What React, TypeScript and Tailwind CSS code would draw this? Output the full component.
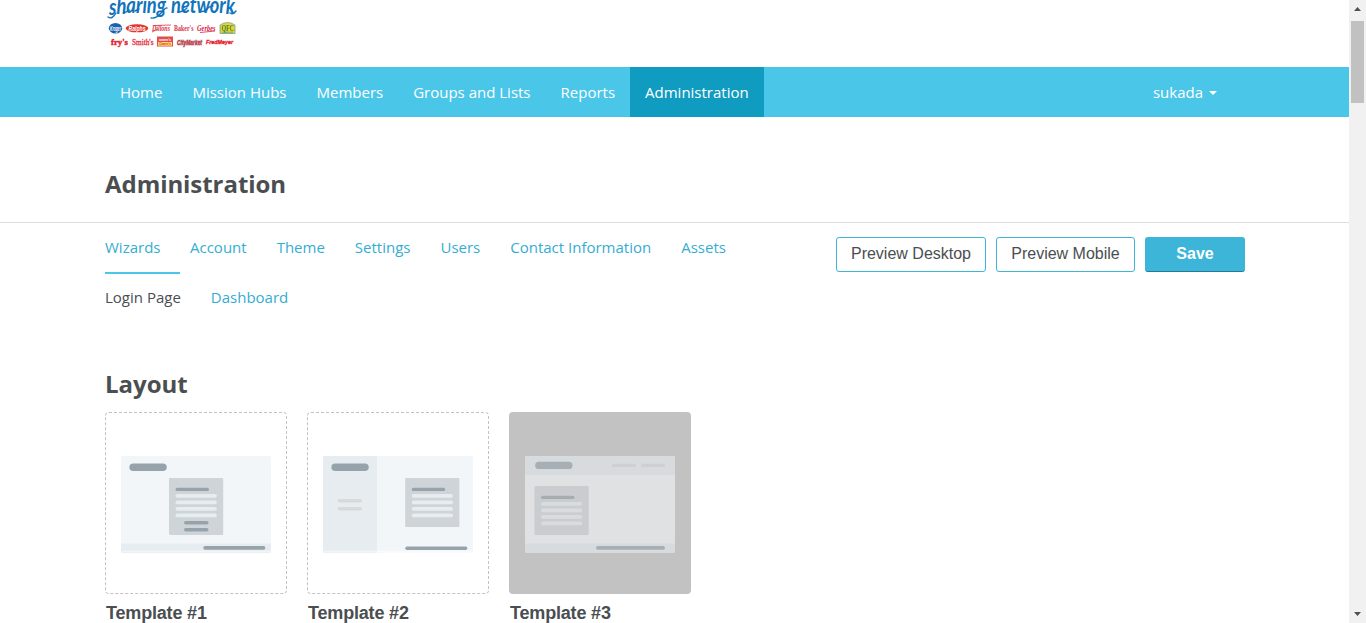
import React from "react";

const navItems = ["Home", "Mission Hubs", "Members", "Groups and Lists", "Reports"];
const tabs = ["Account", "Theme", "Settings", "Users", "Contact Information", "Assets"];

function Logo() {
  return (
    <svg width="134" height="50" viewBox="0 0 134 50" className="block" fontFamily="Liberation Sans, sans-serif" fontWeight="700">
      <g fontSize="22" fontFamily="Lato, sans-serif" fontStyle="italic" fontWeight="700" fill="#1273bd">
        <text x="4" y="14" dy="1 -1 -1 0 -.5 0 0" textLength="57" lengthAdjust="spacingAndGlyphs">sharing</text>
        <text x="66" y="12" dy="1 0 0 0 0 0 1" textLength="64" lengthAdjust="spacingAndGlyphs">network</text>
      </g>
      <path d="M3 17Q7 20 11 13M19 12Q21 13 24 10M30 11L34 9M46 18Q51 19 56 13T62 8M73 12Q78 12 82 8M95 11Q99 13 104 7L108 6M125 13Q128 15 131 11" fill="none" stroke="#1273bd" strokeWidth="1.400" strokeLinecap="round" />
      <ellipse cx="10.5" cy="28.3" rx="6.7" ry="5.3" fill="#1b62ae" />
      <text x="5" y="30.5" fontSize="6.5" fill="#fff" fontStyle="italic" textLength="11" lengthAdjust="spacingAndGlyphs">Kroger</text>
      <ellipse cx="32" cy="28.3" rx="11.3" ry="4" fill="#e2352b" />
      <text x="23.5" y="30.8" fontSize="7" fill="#fff" fontStyle="italic" textLength="17" lengthAdjust="spacingAndGlyphs">Ralphs</text>
      <text x="47" y="31" fontSize="8" fill="#d73547" fontStyle="italic" fontFamily="Liberation Serif, serif" textLength="18" lengthAdjust="spacingAndGlyphs">Dillons</text>
      <path d="M47 32L53 29M49 25.500L66 25" stroke="#d73547" strokeWidth=".8" />
      <text x="69" y="31" fontSize="7.5" fill="#dc3348" fontFamily="Liberation Serif, serif" textLength="19.500" lengthAdjust="spacingAndGlyphs">Baker's</text>
      <text x="92" y="30.500" fontSize="8.500" fill="#d92045" fontStyle="italic" fontFamily="Liberation Serif, serif" textLength="18.500" lengthAdjust="spacingAndGlyphs">Gerbes</text>
      <path d="M95 32.500L110 31" stroke="#d92045" strokeWidth=".8" />
      <path d="M115 25Q122.500 20 130 25V33.500H115Z" fill="#ecd62b" stroke="#5f96a5" strokeWidth=".7" />
      <text x="116.500" y="30.500" fontSize="7.500" fill="#26804b" fontFamily="Liberation Serif, serif" textLength="12" lengthAdjust="spacingAndGlyphs">QFC</text>
      <path d="M117 32.200H128" stroke="#54966a" strokeWidth=".7" />
      <text x="6" y="45" fontSize="9" fill="#e5202c" stroke="#e5202c" strokeWidth=".4" fontFamily="Liberation Serif, serif" textLength="17" lengthAdjust="spacingAndGlyphs">fry's</text>
      <text x="27" y="45.300" fontSize="8.500" fill="#e52b35" fontWeight="400" stroke="#e52b35" strokeWidth=".3" fontFamily="Liberation Serif, serif" textLength="21.500" lengthAdjust="spacingAndGlyphs">Smith's</text>
      <rect x="52" y="36.500" width="16" height="10" fill="#e34b4e" />
      <rect x="53" y="42" width="14" height="3.700" fill="#ffdc69" />
      <text x="54" y="40.800" fontSize="4" fill="#fff" textLength="12" lengthAdjust="spacingAndGlyphs">owen's</text>
      <text x="54" y="45.200" fontSize="3.500" fill="#d74130" textLength="12" lengthAdjust="spacingAndGlyphs">Owen's</text>
      <text x="72" y="44.700" fontSize="8" fill="#e01e35" stroke="#a4a4a4" strokeWidth="1" paintOrder="stroke" fontStyle="italic" textLength="25" lengthAdjust="spacingAndGlyphs">CityMarket</text>
      <text x="101" y="43.900" fontSize="6" fill="#e8212e" stroke="#e8212e" strokeWidth=".35" fontStyle="italic" textLength="27" lengthAdjust="spacingAndGlyphs">FredMeyer</text>
    </svg>
  );
}

type FormProps = { x: number; y: number; h: number; box: string; bar: string; line: string };

function FormBox({ x, y, h, box, bar, line }: FormProps) {
  return (
    <g>
      <rect x={x} y={y} width="54.2" height={h} rx="1" fill={box} />
      <rect x={x + 6.5} y={y + 9.7} width="33.5" height="3.4" rx="1.7" fill={bar} />
      {[16, 22.6, 29, 35.6].map((d) => (
        <rect key={d} x={x + 6.5} y={y + d} width="41.3" height="3.7" rx="1.85" fill={line} />
      ))}
    </g>
  );
}

function TemplateOne() {
  return (
    <svg width="150" height="97" viewBox="0 0 150 97">
      <rect width="150" height="96.7" rx="1.5" fill="#f2f6f9" />
      <path d="M0 87.4H150V95.2Q150 96.700 148.500 96.700H1.500Q0 96.700 0 95.200Z" fill="#e7ecf0" />
      <path d="M.5 95.3H149.500" stroke="#fff" strokeWidth=".6" />
      <rect x="8.4" y="7.5" width="37.3" height="7.5" rx="3.75" fill="#96a3ab" />
      <FormBox x={48} y={22} h={57} box="#cfd4d8" bar="#96a3ab" line="#e7ecf0" />
      <rect x="63" y="65" width="24.5" height="3.6" rx="1.8" fill="#96a3ab" />
      <rect x="63" y="72" width="24.5" height="3.6" rx="1.8" fill="#96a3ab" />
      <rect x="82.3" y="90.1" width="62" height="3.6" rx="1.8" fill="#96a3ab" />
    </svg>
  );
}

function TemplateTwo() {
  return (
    <svg width="150" height="97" viewBox="0 0 150 97">
      <rect width="150" height="96.5" rx="1.5" fill="#f2f6f9" />
      <rect width="54" height="96.7" rx="1" fill="#e7ecf0" />
      <path d="M.5 95.3H149.500" stroke="#fff" strokeWidth=".6" />
      <rect x="8.4" y="7.5" width="37.3" height="7.5" rx="3.75" fill="#96a3ab" />
      <rect x="14.8" y="43" width="24.3" height="3.5" rx="1.75" fill="#d8d9da" />
      <rect x="14.8" y="51" width="24.3" height="3.5" rx="1.75" fill="#d8d9da" />
      <FormBox x={82.2} y={22} h={49} box="#cfd4d8" bar="#96a3ab" line="#e7ecf0" />
      <rect x="82.3" y="90.4" width="62" height="3.6" rx="1.8" fill="#96a3ab" />
    </svg>
  );
}

function TemplateThree() {
  return (
    <svg width="150" height="97" viewBox="0 0 150 97">
      <rect width="150" height="96.7" rx="1.5" fill="#dfe1e3" />
      <path d="M0 0H150V19H0Z" fill="#d7dbde" />
      <path d="M0 87.4H150V95.2Q150 96.700 148.500 96.700H1.500Q0 96.700 0 95.200Z" fill="#d7dbde" />
      <rect x="10.2" y="5.7" width="37.3" height="7.4" rx="3.7" fill="#a6afb5" />
      <rect x="87" y="7.8" width="24" height="3.2" rx="1.6" fill="#cdcfd0" />
      <rect x="116" y="7.8" width="24" height="3.2" rx="1.6" fill="#cdcfd0" />
      <FormBox x={9.5} y={30} h={49} box="#cacdd0" bar="#a6adb1" line="#d9dcdf" />
      <rect x="71" y="90.1" width="69" height="3.6" rx="1.8" fill="#a6afb5" />
    </svg>
  );
}

const templates = [
  { name: "Template #1", art: <TemplateOne />, selected: false },
  { name: "Template #2", art: <TemplateTwo />, selected: false },
  { name: "Template #3", art: <TemplateThree />, selected: true },
];

export default function App() {
  return (
    <div className="flex h-[623px] w-full overflow-hidden bg-white font-['Open_Sans',sans-serif] text-[15px] leading-5 text-[#4a4e51]">
      <div className="flex min-w-0 flex-1 flex-col">
        <header className="h-[67px] shrink-0 pl-[105px]">
          <Logo />
        </header>
        <nav className="flex h-[50px] shrink-0 items-center justify-between bg-[#4ac6e9] pr-[117px] pl-[105px] text-white">
          <div className="flex h-full">
            {navItems.map((item) => (
              <a key={item} className="flex h-full items-center px-[15px] whitespace-nowrap">{item}</a>
            ))}
            <a className="flex h-full items-center bg-[#109bc1] px-[15px]">Administration</a>
          </div>
          <div className="flex h-full items-center gap-[6px] px-[15px]">
            <span>sukada</span>
            <svg className="mt-[2px]" width="8" height="4" viewBox="0 0 8 4"><path d="M0 0H8L4 4Z" fill="currentColor" /></svg>
          </div>
        </nav>
        <div className="flex h-[106px] shrink-0 items-center border-b border-[#dcdddd] pt-[28px] pl-[105px]">
          <h1 className="text-2xl font-bold tracking-[-0.06px]">Administration</h1>
        </div>
        <main className="flex flex-col pl-[105px]">
          <div className="flex h-[50px] items-start justify-between pr-[104px]">
            <div className="flex gap-[30px] pt-[14px] text-[#35add2]">
              <a className="-mr-5 h-[37px] w-[75px] border-b-2 border-[#4ac6e9]">Wizards</a>
              {tabs.map((tab) => (
                <a key={tab} className="whitespace-nowrap">{tab}</a>
              ))}
            </div>
            <div className="flex gap-[10px] pt-[14px] font-['Liberation_Sans',sans-serif] text-base">
              <button className="h-[35px] w-[150px] rounded-[3px] border border-[#3cb5d9] pb-[2px]">Preview Desktop</button>
              <button className="h-[35px] w-[139px] rounded-[3px] border border-[#3cb5d9] pb-[2px]">Preview Mobile</button>
              <button className="h-[35px] w-[100px] rounded-[3px] border-b border-[#237b95] bg-[#3cb5d9] pb-px font-bold text-white">Save</button>
            </div>
          </div>
          <div className="flex gap-[30px] pt-[14px]">
            <a>Login Page</a>
            <a className="text-[#35add2]">Dashboard</a>
          </div>
          <h2 className="mt-[62px] text-2xl leading-[30px] font-bold">Layout</h2>
          <div className="mt-[13px] flex gap-5">
            {templates.map(({ name, art, selected }) => (
              <div key={name} className="w-[182px]">
                <div className={selected ? "flex h-[182px] items-start rounded bg-[#c2c2c2] pt-[44px] pl-4" : "flex h-[182px] items-start rounded border border-dashed border-[#c2c2c2] pt-[43px] pl-[15px]"}>
                  {art}
                </div>
                <div className="mt-[9px] pl-px font-['Liberation_Sans',sans-serif] text-lg leading-5 font-bold tracking-[-0.18px]">{name}</div>
              </div>
            ))}
          </div>
        </main>
      </div>
      <div className="flex w-[17px] shrink-0 flex-col items-center bg-[#f1f1f1] pt-[7px] pb-[7px]">
        <svg width="7" height="4" viewBox="0 0 7 4"><path d="M0 4L3.500 0L7 4Z" fill="#505050" /></svg>
        <div className="mt-[10px] h-[82px] w-[13px] bg-[#c1c1c1]" />
        <svg className="mt-auto" width="7" height="4" viewBox="0 0 7 4"><path d="M0 0L3.500 4L7 0Z" fill="#505050" /></svg>
      </div>
    </div>
  );
}
